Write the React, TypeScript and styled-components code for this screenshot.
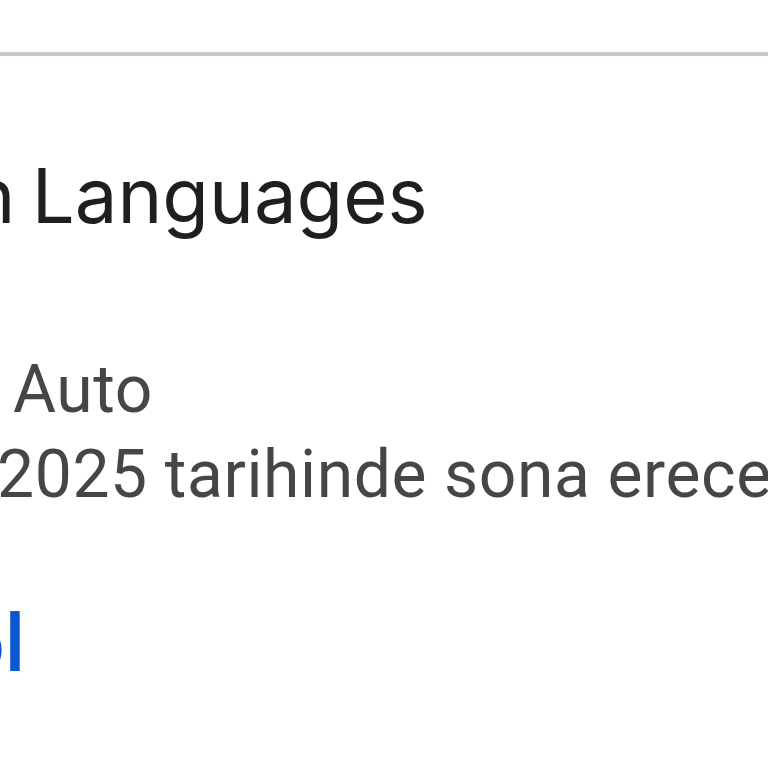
import React from 'react';
import styled, { createGlobalStyle } from 'styled-components';

const GlobalStyle = createGlobalStyle`
  html, body {
    margin: 0;
    padding: 0;
    background: #ffffff;
  }
  body {
    font-family: Roboto, "Noto Sans", Arial, sans-serif;
    -webkit-font-smoothing: antialiased;
  }
`;

// Page frame, clipped like a zoomed phone screen
const Screen = styled.div`
  width: 768px;
  height: 768px;
  overflow: hidden;
  background: #fff;
  display: flex;
  flex-direction: column;
`;

// Divider under the app bar
const Rule = styled.div`
  margin-top: 52px;
  height: 4px;
  background: #cacaca;
  box-shadow: 0 0 1px rgba(0, 0, 0, 0.15);
`;

const Section = styled.section`
  display: flex;
  flex-direction: column;
  white-space: nowrap;
`;

// Text line that begins off the left edge by `shift` px
const Title = styled.h1<{ shift: number }>`
  margin: 101px 0 0;
  margin-left: ${(p) => -p.shift}px;
  font-family: Inter, Roboto, sans-serif;
  font-size: 76px;
  line-height: 76px;
  font-weight: 400;
  word-spacing: -5px;
  color: #1f1f1f;
`;

const Details = styled.div`
  margin-top: 114px;
  display: flex;
  flex-direction: column;
`;

const Detail = styled.p<{ shift: number }>`
  margin: 0;
  margin-left: ${(p) => -p.shift}px;
  font-size: 66px;
  line-height: 85px;
  font-weight: 400;
  letter-spacing: 0.6px;
  color: #444746;
`;

const Action = styled.a<{ shift: number }>`
  margin-top: 88px;
  margin-left: ${(p) => -p.shift}px;
  font-size: 80px;
  line-height: 79px;
  font-weight: 500;
  color: #0b57d0;
  text-decoration: none;
`;

export default function App() {
  return (
    <>
      <GlobalStyle />
      <Screen>
        <Rule />
        <Section>
          <Title shift={190}>Learn Languages</Title>
          <Details>
            <Detail shift={-13}>Auto</Detail>
            <Detail shift={3}>2025 tarihinde sona erecek</Detail>
          </Details>
          <Action shift={234}>Kontrol</Action>
        </Section>
      </Screen>
    </>
  );
}
